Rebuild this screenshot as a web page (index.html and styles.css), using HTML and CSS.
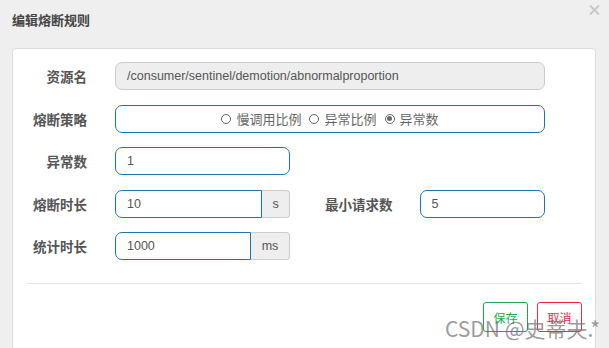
FILE: index.html
```html
<!DOCTYPE html>
<html lang="zh-CN">
<head>
  <meta charset="UTF-8" />
  <title>编辑熔断规则</title>
  <link rel="stylesheet" href="styles.css">
</head>
<body>
  <div class="dialog">
    <div class="dialog-header">
      <h3>编辑熔断规则</h3>
      <svg class="close" width="11" height="10" viewBox="0 0 11 10">
        <path d="M1 0.5 L10 9.5 M10 0.5 L1 9.5" stroke="#c8c8c8" stroke-width="2" fill="none"/>
      </svg>
    </div>

    <div class="card">
      <div class="form-row">
        <label class="label">资源名</label>
        <div class="control wide disabled">/consumer/sentinel/demotion/abnormalproportion</div>
      </div>

      <div class="form-row">
        <label class="label">熔断策略</label>
        <div class="control wide radios">
          <span class="radio"><i></i>慢调用比例</span>
          <span class="radio"><i></i>异常比例</span>
          <span class="radio checked"><i></i>异常数</span>
        </div>
      </div>

      <div class="form-row">
        <label class="label">异常数</label>
        <div class="control short">1</div>
      </div>

      <div class="form-row">
        <label class="label">熔断时长</label>
        <div class="input-group">
          <div class="control">10</div>
          <span class="addon addon-s">s</span>
        </div>
        <label class="label label-right">最小请求数</label>
        <div class="control small">5</div>
      </div>

      <div class="form-row">
        <label class="label">统计时长</label>
        <div class="input-group">
          <div class="control">1000</div>
          <span class="addon addon-ms">ms</span>
        </div>
      </div>

      <hr class="divider">

      <div class="actions">
        <button class="btn btn-save">保存</button>
        <button class="btn btn-cancel">取消</button>
      </div>
    </div>
  </div>

  <div class="watermark">CSDN @史蒂夫.*</div>
</body>
</html>
```

FILE: styles.css
```css
:root {
  --bg: #efefef;
  --text: #555555;
  --blue: #1b75b3;
  --border: #cccccc;
}

body {
  margin: 0;
  background: var(--bg);
  color: var(--text);
  font-family: "Liberation Sans", "Noto Sans CJK SC", sans-serif;
  font-size: 12.5px;
}

.dialog {
  position: relative;
  width: 609px;
  height: 348px;
}

.dialog-header {
  height: 48px;
  padding-left: 12px;
}

.dialog-header h3 {
  margin: 0;
  padding-top: 11px;
  font-family: "Noto Sans CJK SC", sans-serif;
  font-size: 13px;
  font-weight: bold;
  color: #444;
  line-height: 17px;
}

.close {
  position: absolute;
  top: 5px;
  right: 9px;
}

.card {
  margin-left: 12px;
  width: 582px;
  height: 292px;
  background: #fff;
  border: 1px solid #dcdcdc;
  border-radius: 4px;
  padding-top: 13px;
}

.form-row {
  display: flex;
  align-items: center;
  height: 28px;
  margin-bottom: 14.5px;
}

.label {
  width: 74px;
  text-align: right;
  margin-right: 28px;
  font-family: "Noto Sans CJK SC", sans-serif;
  font-weight: bold;
  font-size: 13.5px;
  color: #555;
}

.label-right {
  width: auto;
  margin-left: 35px;
  margin-right: 27px;
}

.control {
  box-sizing: border-box;
  height: 28px;
  line-height: 26px;
  padding: 0 11px;
  border: 1px solid var(--blue);
  border-radius: 7px;
  background: #fff;
  color: #555;
}

.wide {
  width: 430px;
}

.short {
  width: 175px;
}

.small {
  width: 125px;
}

.disabled {
  background: #eeeeee;
  border-color: var(--border);
}

.radios {
  display: flex;
  justify-content: center;
  gap: 8px;
  font-family: "Noto Sans CJK SC", sans-serif;
  font-size: 13px;
  color: #666;
  padding-left: 11px;
}

.radio {
  display: flex;
  align-items: center;
}

.radio i {
  box-sizing: border-box;
  display: inline-block;
  width: 10px;
  height: 10px;
  border: 1px solid #666;
  border-radius: 50%;
  margin-right: 5px;
  position: relative;
}

.radio.checked i::after {
  content: "";
  position: absolute;
  left: 1.5px;
  top: 1.5px;
  width: 5px;
  height: 5px;
  border-radius: 50%;
  background: #666;
}

.input-group {
  display: flex;
  width: 175px;
}

.input-group .control {
  flex: 1;
  border-radius: 7px 0 0 7px;
}

.addon {
  box-sizing: border-box;
  height: 28px;
  line-height: 26px;
  text-align: center;
  background: #eeeeee;
  border: 1px solid var(--border);
  border-left: none;
  border-radius: 0 4px 4px 0;
  color: #555;
}

.addon-s {
  width: 28px;
}

.addon-ms {
  width: 39px;
}

.divider {
  margin: 23px 13px 0 14px;
  border: none;
  border-top: 1px solid #e3e3e3;
}

.actions {
  display: flex;
  justify-content: flex-end;
  gap: 9px;
  margin: 18px 13px 0 0;
}

.btn {
  width: 45px;
  height: 30px;
  padding: 0;
  background: #fff;
  border: 1px solid;
  border-radius: 3px;
  font-family: "Noto Sans CJK SC", sans-serif;
  font-size: 12px;
}

.btn-save {
  color: #1aab4e;
  border-color: #1aab4e;
}

.btn-cancel {
  color: #ee2a44;
  border-color: #ee2a44;
}

.watermark {
  position: absolute;
  left: 445px;
  top: 313px;
  font-family: "Noto Sans CJK SC", sans-serif;
  font-size: 21px;
  line-height: 30px;
  color: rgba(110, 110, 110, 0.7);
  white-space: nowrap;
}
```
